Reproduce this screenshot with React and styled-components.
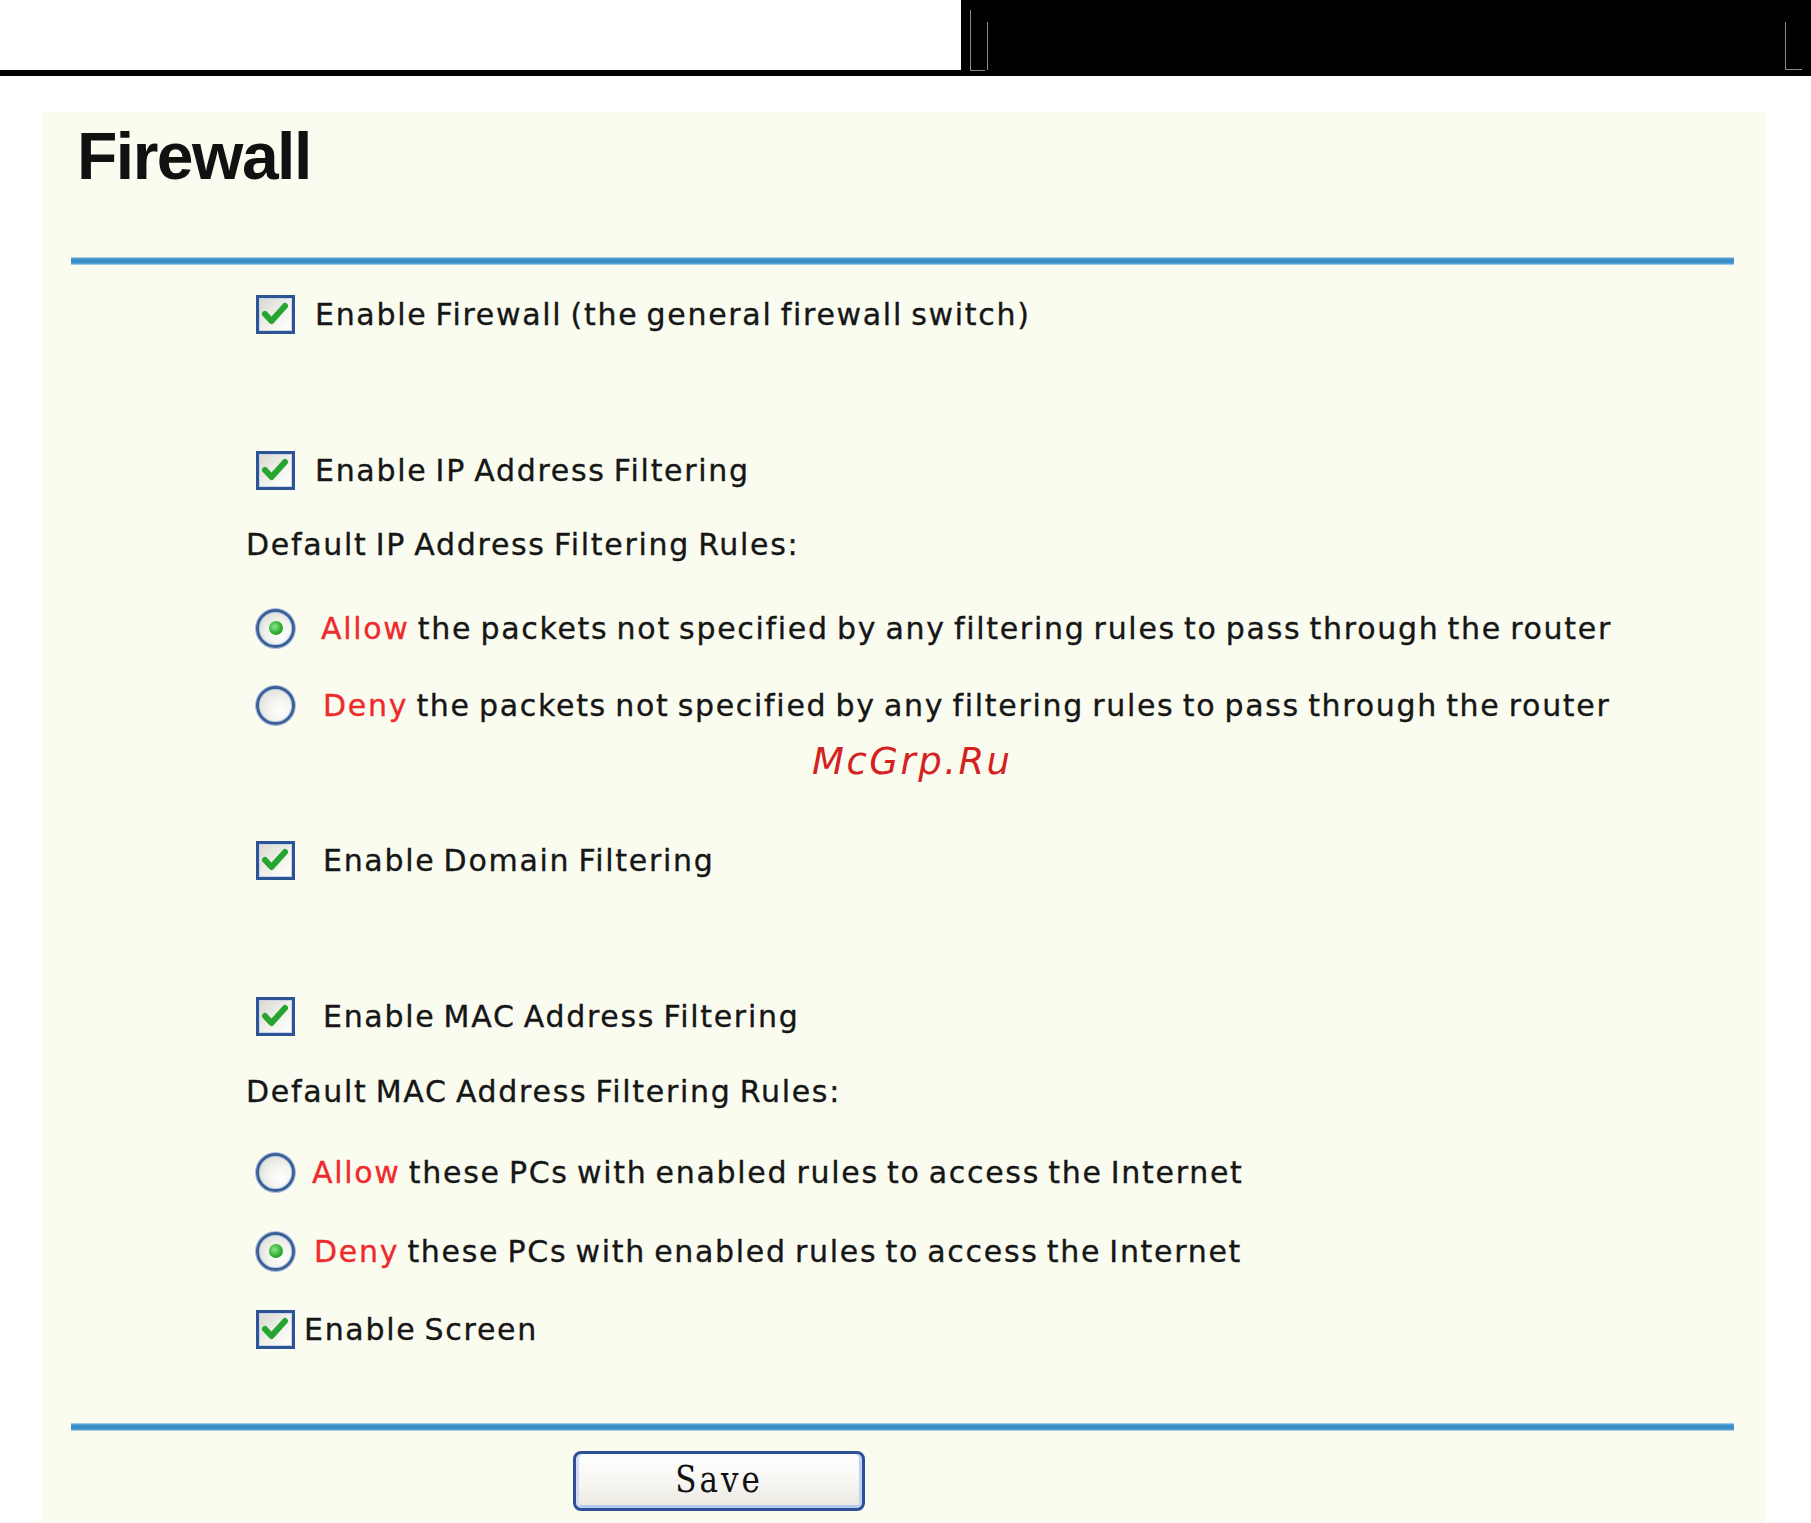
import React from 'react';
import styled, { createGlobalStyle } from 'styled-components';

const Global = createGlobalStyle`
  html, body { margin: 0; padding: 0; background: #fff; }
  body { font-family: "DejaVu Sans", "Liberation Sans", sans-serif; }
`;

const Page = styled.div`
  width: 1811px;
  min-height: 1523px;
  background: #fff;
  overflow: hidden;
`;

const Header = styled.header`
  display: flex;
  height: 76px;
`;

const HeaderBlank = styled.div`
  width: 961px;
  height: 76px;
  box-sizing: border-box;
  border-bottom: 6px solid #000;
`;

const HeaderDark = styled.div`
  flex: 1;
  background: #000;
  position: relative;
`;

const Marks = styled.svg`
  position: absolute;
  inset: 0;
  width: 100%;
  height: 100%;
`;

const Panel = styled.main`
  margin: 36px 46px 0 42px;
  min-height: 1411px;
  box-sizing: border-box;
  background: #fafcf0;
  padding: 11px 31px 14px 29px;
  display: flex;
  flex-direction: column;
`;

const Title = styled.h1`
  margin: 0 0 0 6px;
  font-family: "Liberation Sans", Arial, sans-serif;
  font-weight: 700;
  font-size: 66px;
  line-height: 66px;
  letter-spacing: -1.5px;
  color: #111;
`;

const Rule = styled.div`
  margin-top: ${p => p.$mt}px;
  height: 8px;
  background: linear-gradient(to bottom, #c2ddef 0, #3b8fc8 2px, #3b8fc8 6px, #c2ddef 8px);
`;

const Row = styled.div`
  display: flex;
  align-items: center;
  height: 56px;
  margin-top: ${p => p.$mt}px;
  padding-left: ${p => p.$indent}px;
  gap: ${p => p.$gap || 0}px;
  font-size: 30px;
  letter-spacing: 1.7px;
  word-spacing: -3px;
  color: #161616;
  -webkit-text-stroke: 0.35px #161616;
  white-space: nowrap;
`;

const Red = styled.span`
  color: #f02a2c;
  -webkit-text-stroke: 0.35px #f02a2c;
`;

const Box = styled.span`
  width: 39px;
  height: 39px;
  box-sizing: border-box;
  flex: none;
  border: 3px solid #2d5596;
  box-shadow: inset 0 0 0 1px #c9d4e6;
  background: linear-gradient(135deg, #d8d8d0 0%, #f4f4ef 60%, #ffffff 100%);
  display: flex;
  align-items: center;
  justify-content: center;
`;

const Radio = styled.span`
  width: 39px;
  height: 39px;
  box-sizing: border-box;
  flex: none;
  border-radius: 50%;
  border: 3px solid #3a6099;
  box-shadow: 0 0 0 1px #a9bbd8, inset 0 0 0 1px #c4d0e4;
  background: radial-gradient(circle at 65% 65%, #ffffff 0%, #f1f1ec 45%, #d6d6ce 100%);
  display: flex;
  align-items: center;
  justify-content: center;
  &::after {
    content: "";
    display: ${p => (p.$checked ? 'block' : 'none')};
    width: 14px;
    height: 14px;
    border-radius: 50%;
    background: radial-gradient(circle at 40% 40%, #8fe48f 0%, #2eae2e 55%, #1c8f1c 100%);
  }
`;

const Watermark = styled.div`
  height: 56px;
  display: flex;
  align-items: center;
  padding-left: 741px;
  font-family: "DejaVu Sans", sans-serif;
  font-style: italic;
  font-size: 37px;
  letter-spacing: 2.5px;
  color: #d42222;
`;

const SaveButton = styled.button`
  margin: 20px 0 0 502px;
  width: 292px;
  height: 60px;
  box-sizing: border-box;
  border: 3px solid #2f4f98;
  border-radius: 8px;
  background: linear-gradient(to bottom, #ffffff 0%, #f6f5f1 55%, #e9e7df 100%);
  box-shadow: inset 3px 0 0 #d2ddf5, inset -3px 0 0 #c3d2f2, inset 0 -3px 0 #b5c8ee, inset 0 3px 0 #fdfdff;
  font-family: "DejaVu Serif", "Liberation Serif", serif;
  font-size: 31px;
  letter-spacing: 3px;
  color: #111;
  padding: 0 0 4px;
  display: flex;
  align-items: center;
  justify-content: center;
`;

const SaveLabel = styled.span`
  display: inline-block;
  transform: scaleY(1.2);
`;

function Check() {
  return (
    <svg width="33" height="33" viewBox="0 0 33 33">
      <path d="M6 16 L12.5 23 L26 8" fill="none" stroke="#27a530" strokeWidth="6" strokeLinecap="round" strokeLinejoin="round" />
    </svg>
  );
}

function CheckRow({ mt, gap, label }) {
  return (
    <Row $mt={mt} $indent={185} $gap={gap}>
      <Box><Check /></Box>
      <span>{label}</span>
    </Row>
  );
}

function RadioRow({ mt, gap, checked, word, rest }) {
  return (
    <Row $mt={mt} $indent={185} $gap={gap}>
      <Radio $checked={checked} />
      <span><Red>{word}</Red> {rest}</span>
    </Row>
  );
}

export default function App() {
  return (
    <Page>
      <Global />
      <Header>
        <HeaderBlank />
        <HeaderDark>
          <Marks viewBox="0 0 850 76" preserveAspectRatio="none">
            <path d="M9.5 10 V70.5 H24" fill="none" stroke="#8a8a8a" strokeWidth="1" />
            <path d="M26.5 22 V70" fill="none" stroke="#8a8a8a" strokeWidth="1" />
            <path d="M824.5 22 V69.5 H841" fill="none" stroke="#8a8a8a" strokeWidth="1" />
          </Marks>
        </HeaderDark>
      </Header>
      <Panel>
        <Title>Firewall</Title>
        <Rule $mt={68} />
        <CheckRow mt={21} gap={20} label="Enable Firewall (the general firewall switch)" />
        <CheckRow mt={100} gap={20} label="Enable IP Address Filtering" />
        <Row $mt={18} $indent={175}>Default IP Address Filtering Rules:</Row>
        <RadioRow mt={28} gap={26} checked word="Allow" rest="the packets not specified by any filtering rules to pass through the router" />
        <RadioRow mt={21} gap={28} word="Deny" rest="the packets not specified by any filtering rules to pass through the router" />
        <Watermark>McGrp.Ru</Watermark>
        <CheckRow mt={43} gap={28} label="Enable Domain Filtering" />
        <CheckRow mt={100} gap={28} label="Enable MAC Address Filtering" />
        <Row $mt={19} $indent={175}>Default MAC Address Filtering Rules:</Row>
        <RadioRow mt={25} gap={17} word="Allow" rest="these PCs with enabled rules to access the Internet" />
        <RadioRow mt={23} gap={19} checked word="Deny" rest="these PCs with enabled rules to access the Internet" />
        <CheckRow mt={22} gap={9} label="Enable Screen" />
        <Rule $mt={66} />
        <SaveButton type="button"><SaveLabel>Save</SaveLabel></SaveButton>
      </Panel>
    </Page>
  );
}
